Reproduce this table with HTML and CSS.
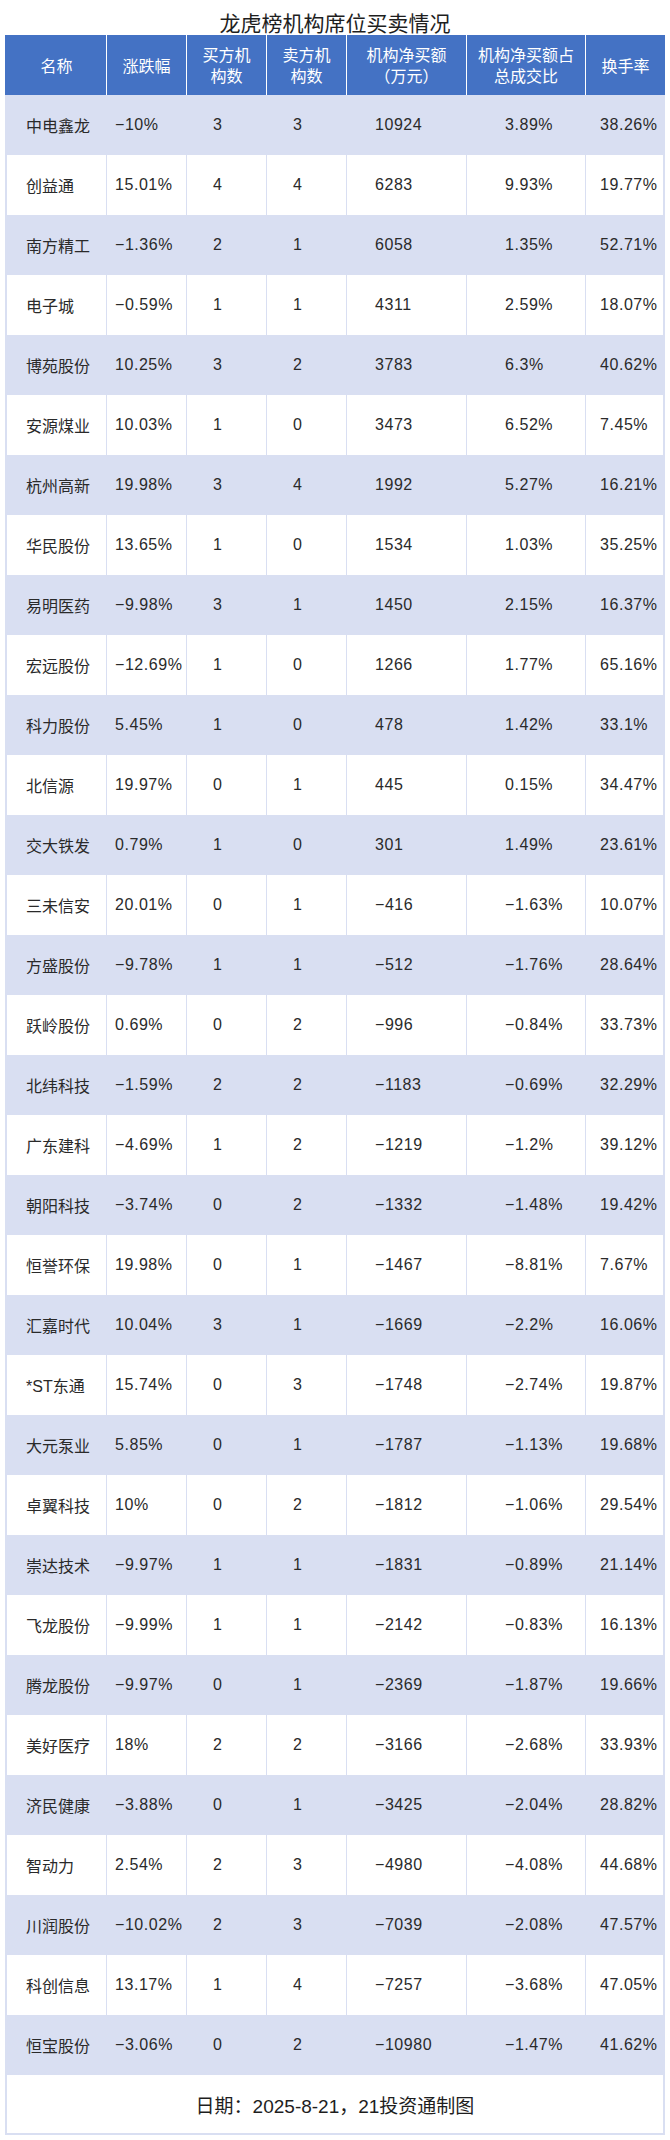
FILE: index.html
```html
<!DOCTYPE html>
<html lang="zh-CN">
<head>
<meta charset="utf-8">
<title>龙虎榜机构席位买卖情况</title>
<link rel="stylesheet" href="styles.css">
</head>
<body>
<div class="sheet">
  <h1 class="title">龙虎榜机构席位买卖情况</h1>
  <div class="grid">
    <div class="row head">
      <div class="c">名称</div>
      <div class="c">涨跌幅</div>
      <div class="c">买方机<br>构数</div>
      <div class="c">卖方机<br>构数</div>
      <div class="c">机构净买额<br>（万元）</div>
      <div class="c">机构净买额占<br>总成交比</div>
      <div class="c">换手率</div>
    </div>
    <div class="row band"><div class="c">中电鑫龙</div><div class="c">−10%</div><div class="c">3</div><div class="c">3</div><div class="c">10924</div><div class="c">3.89%</div><div class="c">38.26%</div></div>
    <div class="row"><div class="c">创益通</div><div class="c">15.01%</div><div class="c">4</div><div class="c">4</div><div class="c">6283</div><div class="c">9.93%</div><div class="c">19.77%</div></div>
    <div class="row band"><div class="c">南方精工</div><div class="c">−1.36%</div><div class="c">2</div><div class="c">1</div><div class="c">6058</div><div class="c">1.35%</div><div class="c">52.71%</div></div>
    <div class="row"><div class="c">电子城</div><div class="c">−0.59%</div><div class="c">1</div><div class="c">1</div><div class="c">4311</div><div class="c">2.59%</div><div class="c">18.07%</div></div>
    <div class="row band"><div class="c">博苑股份</div><div class="c">10.25%</div><div class="c">3</div><div class="c">2</div><div class="c">3783</div><div class="c">6.3%</div><div class="c">40.62%</div></div>
    <div class="row"><div class="c">安源煤业</div><div class="c">10.03%</div><div class="c">1</div><div class="c">0</div><div class="c">3473</div><div class="c">6.52%</div><div class="c">7.45%</div></div>
    <div class="row band"><div class="c">杭州高新</div><div class="c">19.98%</div><div class="c">3</div><div class="c">4</div><div class="c">1992</div><div class="c">5.27%</div><div class="c">16.21%</div></div>
    <div class="row"><div class="c">华民股份</div><div class="c">13.65%</div><div class="c">1</div><div class="c">0</div><div class="c">1534</div><div class="c">1.03%</div><div class="c">35.25%</div></div>
    <div class="row band"><div class="c">易明医药</div><div class="c">−9.98%</div><div class="c">3</div><div class="c">1</div><div class="c">1450</div><div class="c">2.15%</div><div class="c">16.37%</div></div>
    <div class="row"><div class="c">宏远股份</div><div class="c">−12.69%</div><div class="c">1</div><div class="c">0</div><div class="c">1266</div><div class="c">1.77%</div><div class="c">65.16%</div></div>
    <div class="row band"><div class="c">科力股份</div><div class="c">5.45%</div><div class="c">1</div><div class="c">0</div><div class="c">478</div><div class="c">1.42%</div><div class="c">33.1%</div></div>
    <div class="row"><div class="c">北信源</div><div class="c">19.97%</div><div class="c">0</div><div class="c">1</div><div class="c">445</div><div class="c">0.15%</div><div class="c">34.47%</div></div>
    <div class="row band"><div class="c">交大铁发</div><div class="c">0.79%</div><div class="c">1</div><div class="c">0</div><div class="c">301</div><div class="c">1.49%</div><div class="c">23.61%</div></div>
    <div class="row"><div class="c">三未信安</div><div class="c">20.01%</div><div class="c">0</div><div class="c">1</div><div class="c">−416</div><div class="c">−1.63%</div><div class="c">10.07%</div></div>
    <div class="row band"><div class="c">方盛股份</div><div class="c">−9.78%</div><div class="c">1</div><div class="c">1</div><div class="c">−512</div><div class="c">−1.76%</div><div class="c">28.64%</div></div>
    <div class="row"><div class="c">跃岭股份</div><div class="c">0.69%</div><div class="c">0</div><div class="c">2</div><div class="c">−996</div><div class="c">−0.84%</div><div class="c">33.73%</div></div>
    <div class="row band"><div class="c">北纬科技</div><div class="c">−1.59%</div><div class="c">2</div><div class="c">2</div><div class="c">−1183</div><div class="c">−0.69%</div><div class="c">32.29%</div></div>
    <div class="row"><div class="c">广东建科</div><div class="c">−4.69%</div><div class="c">1</div><div class="c">2</div><div class="c">−1219</div><div class="c">−1.2%</div><div class="c">39.12%</div></div>
    <div class="row band"><div class="c">朝阳科技</div><div class="c">−3.74%</div><div class="c">0</div><div class="c">2</div><div class="c">−1332</div><div class="c">−1.48%</div><div class="c">19.42%</div></div>
    <div class="row"><div class="c">恒誉环保</div><div class="c">19.98%</div><div class="c">0</div><div class="c">1</div><div class="c">−1467</div><div class="c">−8.81%</div><div class="c">7.67%</div></div>
    <div class="row band"><div class="c">汇嘉时代</div><div class="c">10.04%</div><div class="c">3</div><div class="c">1</div><div class="c">−1669</div><div class="c">−2.2%</div><div class="c">16.06%</div></div>
    <div class="row"><div class="c">*ST东通</div><div class="c">15.74%</div><div class="c">0</div><div class="c">3</div><div class="c">−1748</div><div class="c">−2.74%</div><div class="c">19.87%</div></div>
    <div class="row band"><div class="c">大元泵业</div><div class="c">5.85%</div><div class="c">0</div><div class="c">1</div><div class="c">−1787</div><div class="c">−1.13%</div><div class="c">19.68%</div></div>
    <div class="row"><div class="c">卓翼科技</div><div class="c">10%</div><div class="c">0</div><div class="c">2</div><div class="c">−1812</div><div class="c">−1.06%</div><div class="c">29.54%</div></div>
    <div class="row band"><div class="c">崇达技术</div><div class="c">−9.97%</div><div class="c">1</div><div class="c">1</div><div class="c">−1831</div><div class="c">−0.89%</div><div class="c">21.14%</div></div>
    <div class="row"><div class="c">飞龙股份</div><div class="c">−9.99%</div><div class="c">1</div><div class="c">1</div><div class="c">−2142</div><div class="c">−0.83%</div><div class="c">16.13%</div></div>
    <div class="row band"><div class="c">腾龙股份</div><div class="c">−9.97%</div><div class="c">0</div><div class="c">1</div><div class="c">−2369</div><div class="c">−1.87%</div><div class="c">19.66%</div></div>
    <div class="row"><div class="c">美好医疗</div><div class="c">18%</div><div class="c">2</div><div class="c">2</div><div class="c">−3166</div><div class="c">−2.68%</div><div class="c">33.93%</div></div>
    <div class="row band"><div class="c">济民健康</div><div class="c">−3.88%</div><div class="c">0</div><div class="c">1</div><div class="c">−3425</div><div class="c">−2.04%</div><div class="c">28.82%</div></div>
    <div class="row"><div class="c">智动力</div><div class="c">2.54%</div><div class="c">2</div><div class="c">3</div><div class="c">−4980</div><div class="c">−4.08%</div><div class="c">44.68%</div></div>
    <div class="row band"><div class="c">川润股份</div><div class="c">−10.02%</div><div class="c">2</div><div class="c">3</div><div class="c">−7039</div><div class="c">−2.08%</div><div class="c">47.57%</div></div>
    <div class="row"><div class="c">科创信息</div><div class="c">13.17%</div><div class="c">1</div><div class="c">4</div><div class="c">−7257</div><div class="c">−3.68%</div><div class="c">47.05%</div></div>
    <div class="row band"><div class="c">恒宝股份</div><div class="c">−3.06%</div><div class="c">0</div><div class="c">2</div><div class="c">−10980</div><div class="c">−1.47%</div><div class="c">41.62%</div></div>
  </div>
  <div class="footer">日期：2025-8-21，21投资通制图</div>
</div>
</body>
</html>
```

FILE: styles.css
```css
html, body {
  margin: 0;
  padding: 0;
  background: #ffffff;
}

body {
  font-family: "Liberation Sans", "Noto Sans CJK SC", sans-serif;
  color: #2a2a2a;
}

.sheet {
  width: 660px;
  padding: 0 5px;
}

.title {
  margin: 0;
  height: 35px;
  box-sizing: border-box;
  padding-top: 9px;
  font-size: 21px;
  line-height: 26px;
  font-weight: normal;
  text-align: center;
  color: #1e1e1e;
  font-family: "Noto Sans CJK SC", sans-serif;
}

.row {
  display: grid;
  grid-template-columns: 101px 80px 80px 80px 120px 119px 80px;
  height: 60px;
  background: #ffffff;
}

.row.band {
  background: #d9dff2;
}

.c {
  box-sizing: border-box;
  display: flex;
  align-items: center;
  height: 100%;
  font-size: 16px;
  letter-spacing: 0.55px;
  border-left: 1px solid #d9dff2;
  white-space: nowrap;
}

.c:nth-child(1) { border-left-width: 2px; padding-left: 19px; letter-spacing: 0; }
.c:nth-child(2) { padding-left: 8px; }
.c:nth-child(3) { padding-left: 26px; }
.c:nth-child(4) { padding-left: 26px; }
.c:nth-child(5) { padding-left: 28px; }
.c:nth-child(6) { padding-left: 38px; }
.c:nth-child(7) { padding-left: 14px; border-right: 2px solid #d9dff2; }

.row.head {
  background: #4472c4;
}

.row.head .c {
  justify-content: center;
  text-align: center;
  padding: 2px 0 0 0;
  color: #ffffff;
  line-height: 21px;
  letter-spacing: 0;
  border-left: 1px solid #ffffff;
  border-right: none;
}

.row.head .c:nth-child(1) {
  border-left: 2px solid #4472c4;
}

.footer {
  box-sizing: border-box;
  height: 60px;
  display: flex;
  align-items: center;
  justify-content: center;
  border: 2px solid #d9dff2;
  border-top: none;
  font-size: 19px;
  color: #1e1e1e;
}
```
